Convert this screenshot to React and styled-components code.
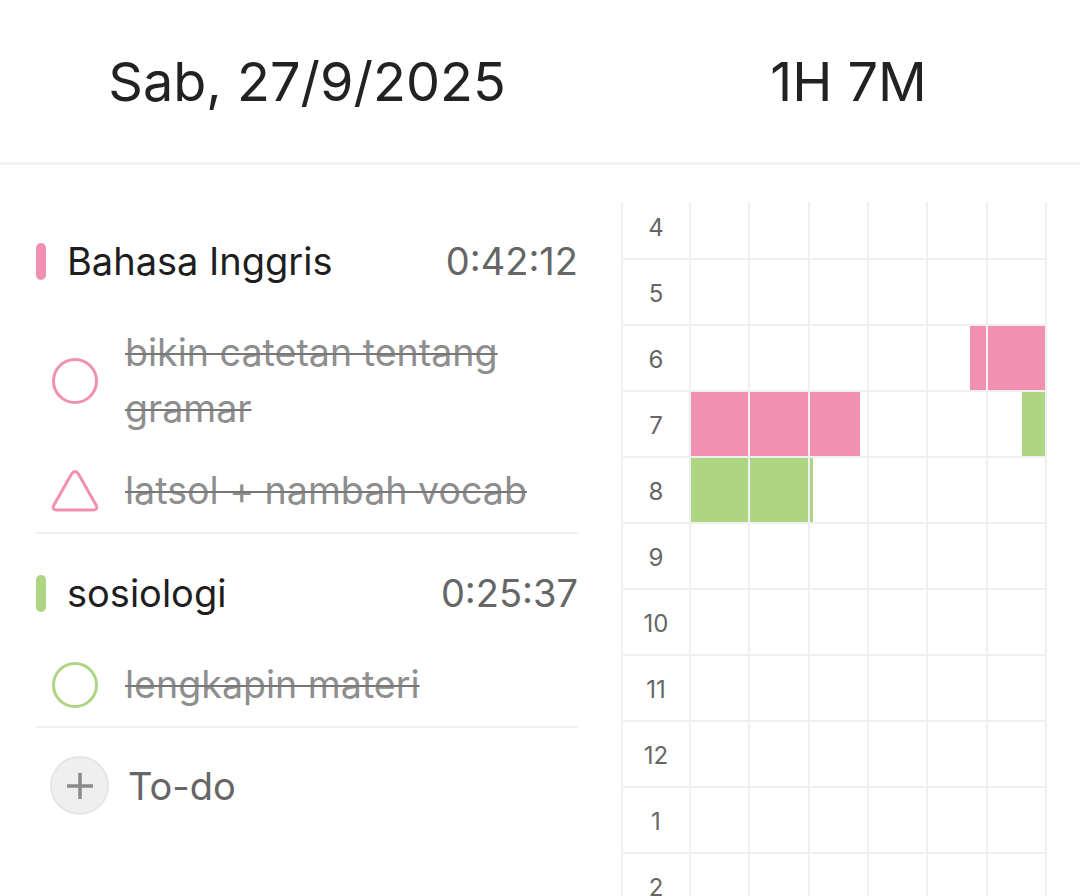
import React from 'react';
import styled, { createGlobalStyle } from 'styled-components';

const PINK = '#f290b1';
const GREEN = '#aed581';
const LINE = '#f0f0f4';

const GlobalStyle = createGlobalStyle`
    body {
        margin: 0;
        background: #fff;
        font-family: Inter, "Noto Sans", sans-serif;
        color: #222;
    }
`;

const Page = styled.div`
    width: 1080px;
    height: 896px;
    overflow: hidden;
    display: flex;
    flex-direction: column;
`;

const Header = styled.header`
    display: grid;
    grid-template-columns: 542px 1fr;
    column-gap: 43px;
    padding-left: 36px;
    height: 162px;
    align-items: center;
    border-bottom: 3px solid #f2f2f2;
    flex-shrink: 0;
`;

const HeaderText = styled.div`
    font-size: 54px;
    text-align: center;
    color: #222;
    padding-right: ${p => p.$pr || 0}px;
`;

const Body = styled.div`
    display: grid;
    grid-template-columns: 542px 426px;
    column-gap: 43px;
    padding-left: 36px;
    padding-top: 37px;
    flex: 1;
    min-height: 0;
`;

const List = styled.div`
    display: flex;
    flex-direction: column;
`;

const Section = styled.div`
    border-bottom: 2px solid #f0f0f0;
`;

const SubjectRow = styled.div`
    display: flex;
    align-items: center;
    padding: 31px 0 23px;
    height: 56px;
`;

const Bar = styled.span`
    width: 10px;
    height: 37px;
    border-radius: 5px;
    background: ${p => p.$color};
    margin-right: 21px;
`;

const SubjectName = styled.span`
    flex: 1;
    font-size: 38px;
    color: #1e1e1e;
`;

const SubjectTime = styled.span`
    font-size: 38px;
    color: #666;
`;

const TaskRow = styled.div`
    display: flex;
    align-items: center;
    padding: 13px 0 13px 14px;
`;

const IconBox = styled.div`
    width: 50px;
    height: 50px;
    flex-shrink: 0;
    margin-right: 25px;
    display: flex;
    align-items: center;
    justify-content: center;
`;

const TaskText = styled.span`
    font-size: 37.6px;
    line-height: 56px;
    color: #8e8e8e;
    text-decoration: line-through;
    text-decoration-thickness: 2px;
    text-decoration-color: #777;
`;

const AddRow = styled.div`
    display: flex;
    align-items: center;
    padding: 28px 0 0 14px;
`;

const AddButton = styled.div`
    width: 55px;
    height: 55px;
    border-radius: 50%;
    background: #efefef;
    border: 2px solid #e6e6e6;
    display: flex;
    align-items: center;
    justify-content: center;
    margin-right: 19px;
`;

const AddLabel = styled.span`
    font-size: 38px;
    color: #666;
`;

const ChartWindow = styled.div`
    overflow: hidden;
    height: 100%;
`;

const Chart = styled.div`
    margin-top: -10px;
    display: grid;
    grid-template-columns: 66px repeat(6, 1fr);
    grid-auto-rows: 64px;
    gap: 2px;
    padding: 2px;
    background: ${LINE};
`;

const HourCell = styled.div`
    background: #fff;
    display: flex;
    align-items: center;
    justify-content: center;
    font-size: 24px;
    color: #666;
    padding-top: 2px;
`;

const Cell = styled.div`
    background: #fff;
    display: flex;
    justify-content: ${p => (p.$end ? 'flex-end' : 'flex-start')};
`;

const Fill = styled.div`
    height: 100%;
    background: ${p => p.$color};
`;

const Circle = ({ color }) => (
  <svg width="48" height="48" viewBox="0 0 48 48">
    <circle cx="24" cy="24" r="21.5" fill="none" stroke={color} strokeWidth="3" />
  </svg>
);

const Triangle = ({ color }) => (
  <svg width="50" height="46" viewBox="0 0 50 46">
    <path
      d="M21.5 6 Q25 1 28.5 6 L46 37 Q48.5 42 43 42 L7 42 Q1.5 42 4 37 Z"
      fill="none"
      stroke={color}
      strokeWidth="3"
      strokeLinejoin="round"
    />
  </svg>
);

const Plus = () => (
  <svg width="30" height="30" viewBox="0 0 30 30">
    <path d="M15 2 V28 M2 15 H28" stroke="#8a8a8a" strokeWidth="3.5" />
  </svg>
);

const subjects = [
  {
    name: 'Bahasa Inggris',
    time: '0:42:12',
    color: PINK,
    tasks: [
      { text: 'bikin catetan tentang gramar', icon: 'circle' },
      { text: 'latsol + nambah vocab', icon: 'triangle' },
    ],
  },
  {
    name: 'sosiologi',
    time: '0:25:37',
    color: GREEN,
    tasks: [{ text: 'lengkapin materi', icon: 'circle' }],
  },
];

const hours = [4, 5, 6, 7, 8, 9, 10, 11, 12, 1, 2, 3];

// fills per hour row: [column, portion, fromRight, color]
const fills = {
  6: [[4, 0.28, true, PINK], [5, 1, false, PINK]],
  7: [[0, 1, false, PINK], [1, 1, false, PINK], [2, 0.88, false, PINK], [5, 0.4, true, GREEN]],
  8: [[0, 1, false, GREEN], [1, 1, false, GREEN], [2, 0.05, false, GREEN]],
};

const App = () => {
  return (
    <Page>
      <GlobalStyle />
      <Header>
        <HeaderText>Sab, 27/9/2025</HeaderText>
        <HeaderText $pr={4}>1H 7M</HeaderText>
      </Header>
      <Body>
        <List>
          {subjects.map((s, i) => (
            <Section key={i}>
              <SubjectRow>
                <Bar $color={s.color} />
                <SubjectName>{s.name}</SubjectName>
                <SubjectTime>{s.time}</SubjectTime>
              </SubjectRow>
              {s.tasks.map((t, j) => (
                <TaskRow key={j}>
                  <IconBox>
                    {t.icon === 'circle' ? <Circle color={s.color} /> : <Triangle color={s.color} />}
                  </IconBox>
                  <TaskText>{t.text}</TaskText>
                </TaskRow>
              ))}
            </Section>
          ))}
          <AddRow>
            <AddButton>
              <Plus />
            </AddButton>
            <AddLabel>To-do</AddLabel>
          </AddRow>
        </List>
        <ChartWindow>
          <Chart>
            {hours.map(h => (
              <React.Fragment key={h}>
                <HourCell>{h}</HourCell>
                {[0, 1, 2, 3, 4, 5].map(c => {
                  const f = (fills[h] || []).find(x => x[0] === c);
                  return (
                    <Cell key={c} $end={f && f[2]}>
                      {f && <Fill $color={f[3]} style={{ width: `${f[1] * 100}%` }} />}
                    </Cell>
                  );
                })}
              </React.Fragment>
            ))}
          </Chart>
        </ChartWindow>
      </Body>
    </Page>
  );
};

export default App;
